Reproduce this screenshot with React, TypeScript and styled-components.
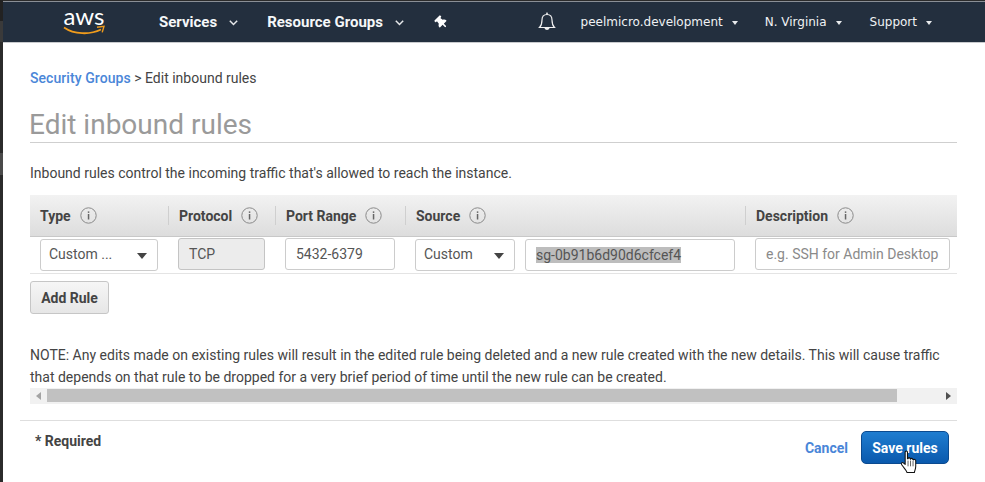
import React from "react";
import styled, { createGlobalStyle } from "styled-components";
import { FaThumbtack } from "react-icons/fa";

const GlobalStyle = createGlobalStyle`
  html, body {
    margin: 0;
    padding: 0;
    background: #fff;
  }
  body {
    width: 985px;
    height: 482px;
    overflow: hidden;
    font-family: Roboto, "Liberation Sans", sans-serif;
    font-size: 14px;
    color: #444;
  }
`;

const Shell = styled.div`
  display: flex;
  height: 482px;
  background: #fff;
`;

const EdgeStrip = styled.div`
  width: 3px;
  flex-shrink: 0;
  background: linear-gradient(
    #222 0 21px,
    #3a3a3a 21px 42px,
    #2b2b2b 42px 153px,
    #4a4a4a 153px 175px,
    #2b2b2b 175px
  );
`;

const Main = styled.div`
  flex: 1;
  min-width: 0;
  border-top: 1px solid #2b2b2b;
`;

const Nav = styled.header`
  box-sizing: border-box;
  height: 42px;
  padding: 0 53px 0 60px;
  display: flex;
  align-items: center;
  background: #232f3e;
  border-top: 1px solid #8a8f96;
  border-bottom: 1px solid #c9cbce;
  color: #fff;
`;

const Logo = styled.div`
  width: 42px;
  height: 32px;
  display: flex;
  flex-direction: column;
  align-items: center;
`;

const LogoWord = styled.span`
  font-family: Lato, sans-serif;
  font-size: 24px;
  line-height: 20px;
  height: 19px;
  letter-spacing: 0;
  color: #fff;
`;

const NavLink = styled.span<{ $gap: number }>`
  margin-left: ${({ $gap }) => $gap}px;
  font-weight: 700;
  font-size: 15px;
  color: #f5f7f9;
`;

const NavChevron = styled.svg`
  width: 9px;
  height: 6px;
  margin-left: 12px;
  margin-top: 2px;
`;

const PinWrap = styled.span`
  margin-left: 31px;
  display: flex;
  transform: rotate(-45deg);
`;

const NavRight = styled.div`
  margin-left: auto;
  display: flex;
  align-items: center;
`;

const BellIcon = styled.svg`
  width: 18px;
  height: 20px;
  margin-right: 25px;
`;

const AccountLink = styled.span<{ $gap?: number }>`
  margin-left: ${({ $gap }) => $gap ?? 0}px;
  font-family: "DejaVu Sans", sans-serif;
  font-size: 12px;
  color: #f0f2f4;
`;

const NavCaret = styled.span`
  margin-left: 9px;
  margin-top: 2px;
  border-left: 3.5px solid transparent;
  border-right: 3.5px solid transparent;
  border-top: 4px solid #e8eaec;
`;

const Content = styled.main`
  padding: 26px 28px 0 27px;
`;

const Breadcrumb = styled.div`
  font-size: 14px;
  line-height: 18px;
  color: #444;
`;

const CrumbLink = styled.a`
  color: #4a86d8;
  font-weight: 500;
  letter-spacing: 0.07px;
`;

const Title = styled.h1`
  box-sizing: border-box;
  height: 56px;
  margin: 0;
  padding-top: 20px;
  text-indent: -1px;
  font-size: 28px;
  line-height: 35px;
  font-weight: 400;
  color: #9a9a9a;
  border-bottom: 1px solid #cfcfcf;
`;

const Intro = styled.p`
  margin: 21px 0 13px;
  font-size: 14px;
  line-height: 18px;
  color: #444;
`;

const Columns = styled.div`
  display: grid;
  grid-template-columns: 138px 107px 130px 340px 212px;
`;

const HeaderRow = styled(Columns)`
  box-sizing: border-box;
  height: 42px;
  align-items: center;
  background: linear-gradient(#f2f2f2, #dddddd);
  border-bottom: 1px solid #c8c8c8;
`;

const HeaderCell = styled.div<{ $first?: boolean }>`
  box-sizing: border-box;
  height: 19px;
  padding-left: 10px;
  display: flex;
  align-items: center;
  gap: 9px;
  border-left: ${({ $first }) => ($first ? "none" : "1px solid #cfcfcf")};
  font-size: 14px;
  font-weight: 700;
  color: #444;
`;

const InfoIcon = styled.svg`
  width: 17px;
  height: 17px;
  flex-shrink: 0;
`;

const BodyRow = styled(Columns)`
  box-sizing: border-box;
  height: 37px;
  border-bottom: 1px solid #e4e4e4;
`;

const Cell = styled.div<{ $split?: boolean; $trim?: boolean }>`
  padding: 1px ${({ $trim }) => ($trim ? 7 : 10)}px 0 10px;
  display: ${({ $split }) => ($split ? "flex" : "block")};
  gap: 10px;
`;

const Field = styled.div<{ $grow?: boolean; $off?: boolean; $drop?: number }>`
  box-sizing: border-box;
  height: 32px;
  margin-top: ${({ $drop }) => $drop ?? 0}px;
  padding: 0 10px;
  display: flex;
  align-items: center;
  flex: ${({ $grow }) => ($grow ? 1 : "none")};
  border: 1px solid ${({ $off }) => ($off ? "#c4c4c4" : "#cccccc")};
  border-radius: 3px;
  background: ${({ $off }) => ($off ? "#ececec" : "#fff")};
  font-size: 14px;
  color: #555;
  white-space: nowrap;
`;

const SelectField = styled(Field)<{ $width?: number }>`
  width: ${({ $width }) => ($width ? `${$width}px` : "auto")};
  justify-content: space-between;
  padding-left: 8px;
  padding-bottom: 2px;
`;

const SelectCaret = styled.span`
  border-left: 5px solid transparent;
  border-right: 5px solid transparent;
  border-top: 6px solid #444;
  margin-top: 4px;
`;

const Selected = styled.span`
  background: #bdbdbd;
  color: #555;
`;

const Placeholder = styled.span`
  color: #8a8a8a;
`;

const AddRule = styled.button`
  box-sizing: border-box;
  display: block;
  width: 79px;
  height: 33px;
  margin-top: 7px;
  padding: 0;
  border: 1px solid #c6c6c6;
  border-radius: 3px;
  background: linear-gradient(#f6f6f6, #e6e6e6);
  font: 700 14px Roboto, sans-serif;
  color: #444;
`;

const Note = styled.p`
  margin: 30px 0 0;
  font-size: 14px;
  line-height: 22px;
  color: #444;
`;

const ScrollTrack = styled.div`
  box-sizing: border-box;
  height: 16px;
  padding: 1px 6px;
  display: flex;
  align-items: center;
  background: #f1f1f1;
`;

const ScrollArrow = styled.span<{ $right?: boolean }>`
  border-top: 4px solid transparent;
  border-bottom: 4px solid transparent;
  border-left: ${({ $right }) => ($right ? "5px solid #505050" : "none")};
  border-right: ${({ $right }) => ($right ? "none" : "5px solid #a3a3a3")};
`;

const ScrollThumb = styled.div`
  width: 850px;
  height: 13px;
  margin: 0 auto 0 6px;
  align-self: flex-start;
  background: #c1c1c1;
`;

const Footer = styled.footer`
  height: 50px;
  margin: 16px 0 0 -10px;
  padding: 10px 8px 0 15px;
  display: flex;
  align-items: flex-start;
  border-top: 1px solid #dedede;
`;

const Required = styled.span`
  margin-right: auto;
  line-height: 20px;
  font-size: 14px;
  font-weight: 700;
  color: #444;
`;

const Cancel = styled.a`
  margin: 7px 13px 0 0;
  line-height: 20px;
  font-size: 14px;
  font-weight: 700;
  color: #4a86d8;
`;

const SaveButton = styled.button`
  position: relative;
  box-sizing: border-box;
  width: 88px;
  height: 33px;
  padding: 0;
  border: 1px solid #0b4a8f;
  border-radius: 5px;
  background: linear-gradient(#1f7dd0, #0a59ad);
  font: 700 14px Roboto, sans-serif;
  color: #fff;
`;

const HandCursor = styled.svg`
  position: absolute;
  left: 38px;
  top: 18px;
  width: 18px;
  height: 24px;
`;

const Info = () => (
  <InfoIcon viewBox="0 0 17 17">
    <circle cx="8.5" cy="8.5" r="7.7" fill="none" stroke="#8a8a8a" strokeWidth="1" />
    <rect x="7.8" y="7" width="1.5" height="5.5" fill="#666" />
    <rect x="7.8" y="4.4" width="1.5" height="1.5" fill="#666" />
  </InfoIcon>
);

const Chevron = () => (
  <NavChevron viewBox="0 0 9 6">
    <path d="M0.8 0.8 L4.5 4.5 L8.2 0.8" fill="none" stroke="#e6e8ea" strokeWidth="1.5" />
  </NavChevron>
);

export default function App() {
  return (
    <>
      <GlobalStyle />
      <Shell>
        <EdgeStrip />
        <Main>
          <Nav>
            <Logo>
              <LogoWord>aws</LogoWord>
              <svg width="42" height="11" viewBox="0 0 42 11">
                <path d="M1 2.5 C11 9.5 27 10 38 4.5" fill="none" stroke="#f09c1c" strokeWidth="1.8" />
                <path d="M34 2.2 L41 1.4 L39.2 7.4" fill="none" stroke="#f09c1c" strokeWidth="1.4" />
              </svg>
            </Logo>
            <NavLink $gap={54}>Services</NavLink>
            <Chevron />
            <NavLink $gap={29}>Resource Groups</NavLink>
            <Chevron />
            <PinWrap>
              <FaThumbtack size={13} color="#fff" />
            </PinWrap>
            <NavRight>
              <BellIcon viewBox="0 0 18 20">
                <path
                  d="M1.5 15.5 C3.5 13.5 4 11.5 4 8 C4 4.5 6 2.5 9 2.5 C12 2.5 14 4.5 14 8 C14 11.5 14.5 13.5 16.5 15.5 Z"
                  fill="none"
                  stroke="#f0f0f0"
                  strokeWidth="1.2"
                />
                <path d="M6.5 16 C7 18.5 11 18.5 11.5 16 Z" fill="#f0f0f0" />
                <rect x="8.2" y="0.6" width="1.6" height="2" fill="#f0f0f0" />
              </BellIcon>
              <AccountLink>peelmicro.development</AccountLink>
              <NavCaret />
              <AccountLink $gap={27}>N. Virginia</AccountLink>
              <NavCaret />
              <AccountLink $gap={28}>Support</AccountLink>
              <NavCaret />
            </NavRight>
          </Nav>

          <Content>
            <Breadcrumb>
              <CrumbLink>Security Groups</CrumbLink> &gt; Edit inbound rules
            </Breadcrumb>
            <Title>Edit inbound rules</Title>
            <Intro>Inbound rules control the incoming traffic that's allowed to reach the instance.</Intro>

            <HeaderRow>
              <HeaderCell $first>
                Type <Info />
              </HeaderCell>
              <HeaderCell>
                Protocol <Info />
              </HeaderCell>
              <HeaderCell>
                Port Range <Info />
              </HeaderCell>
              <HeaderCell>
                Source <Info />
              </HeaderCell>
              <HeaderCell>
                Description <Info />
              </HeaderCell>
            </HeaderRow>

            <BodyRow>
              <Cell>
                <SelectField $drop={1}>
                  Custom ...
                  <SelectCaret />
                </SelectField>
              </Cell>
              <Cell>
                <Field $off>TCP</Field>
              </Cell>
              <Cell>
                <Field>5432-6379</Field>
              </Cell>
              <Cell $split>
                <SelectField $width={100} $drop={1}>
                  Custom
                  <SelectCaret />
                </SelectField>
                <Field $grow $drop={1}>
                  <Selected>sg-0b91b6d90d6cfcef4</Selected>
                </Field>
              </Cell>
              <Cell $trim>
                <Field>
                  <Placeholder>e.g. SSH for Admin Desktop</Placeholder>
                </Field>
              </Cell>
            </BodyRow>

            <AddRule>Add Rule</AddRule>

            <Note>
              NOTE: Any edits made on existing rules will result in the edited rule being deleted and a new rule created
              with the new details. This will cause traffic that depends on that rule to be dropped for a very brief
              period of time until the new rule can be created.
            </Note>

            <ScrollTrack>
              <ScrollArrow />
              <ScrollThumb />
              <ScrollArrow $right />
            </ScrollTrack>

            <Footer>
              <Required>* Required</Required>
              <Cancel>Cancel</Cancel>
              <SaveButton>
                Save rules
                <HandCursor viewBox="0 0 18 25">
                  <path
                    d="M5 2 C5 0.6 7.4 0.6 7.4 2 L7.4 9 L8 9 C8 7.6 10.2 7.6 10.2 9 L10.6 9.6 C10.8 8.4 13 8.4 13 9.8 L13.4 10.4 C13.8 9.4 16 9.6 16 11 L16 17 C16 20 15 21 14.6 23.5 L7 23.5 C6.4 21 3.6 18.6 1.4 15.4 C0.2 13.6 2 12.4 3.4 13.6 L5 15 Z"
                    fill="#fff"
                    stroke="#111"
                    strokeWidth="1.1"
                    strokeLinejoin="round"
                  />
                  <path d="M8 11 V17 M10.6 11 V17 M13.2 11.5 V17" stroke="#333" strokeWidth="0.8" fill="none" />
                </HandCursor>
              </SaveButton>
            </Footer>
          </Content>
        </Main>
      </Shell>
    </>
  );
}
